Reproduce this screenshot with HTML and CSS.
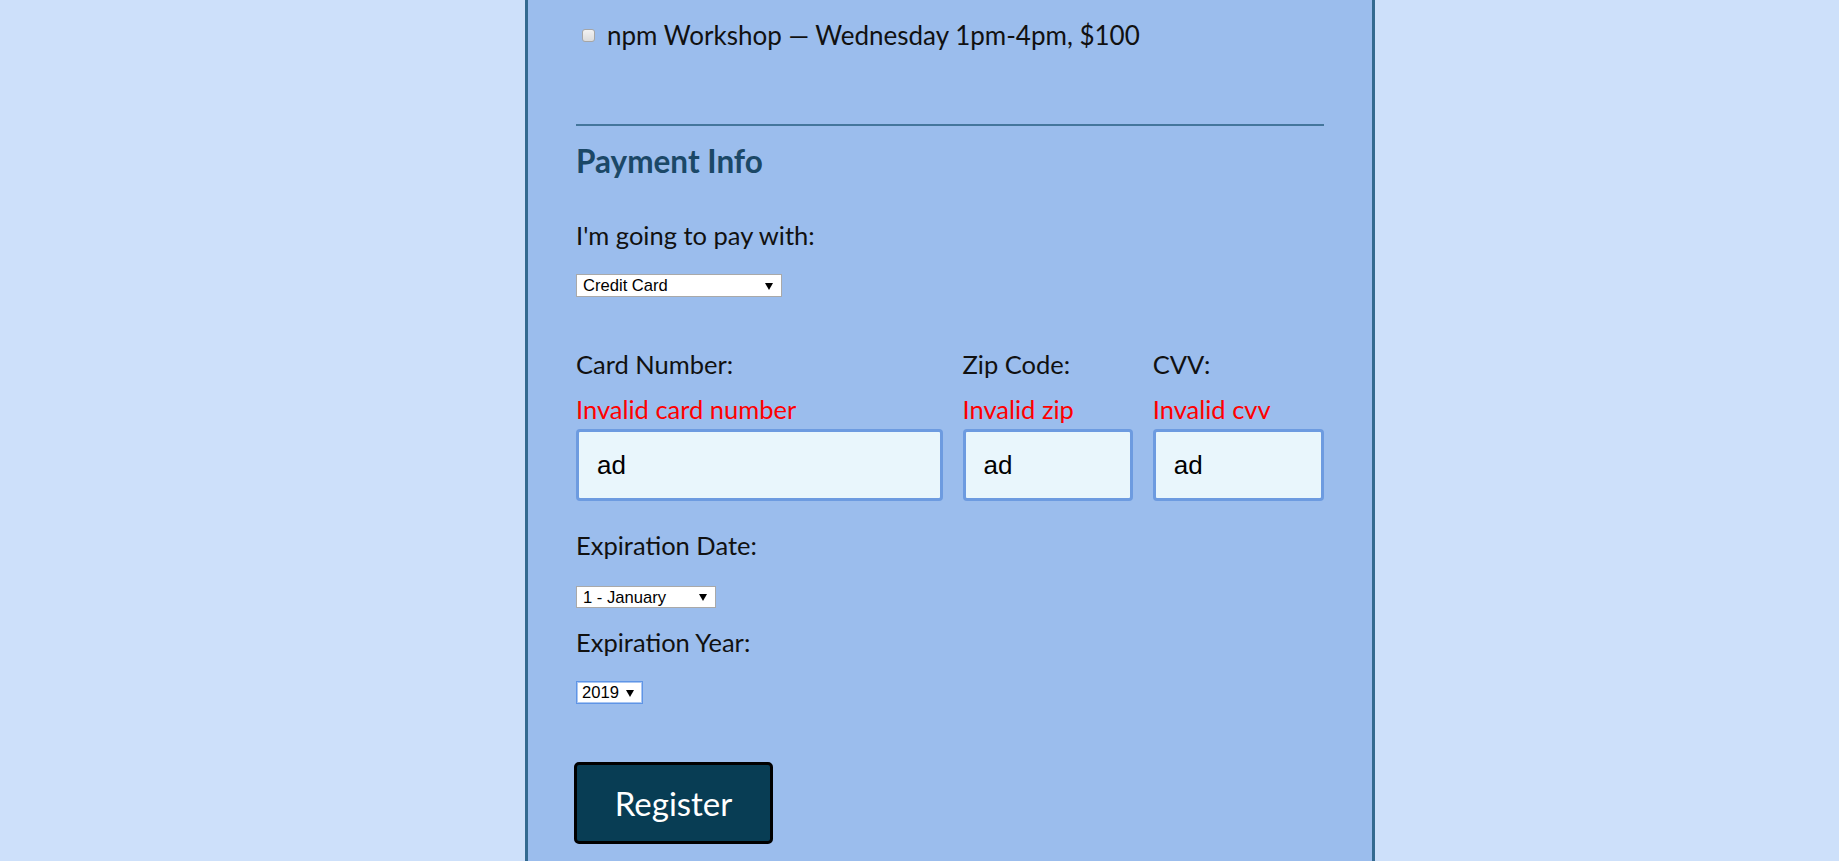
FILE: index.html
```html
<!DOCTYPE html>
<html lang="en">
<head>
<meta charset="utf-8">
<title>Registration</title>
<link rel="stylesheet" href="styles.css">
</head>
<body>
<div class="page">
  <form class="form">
    <label class="activity">
      <input type="checkbox" class="check" name="npm">
      <span>npm Workshop — Wednesday 1pm-4pm, $100</span>
    </label>

    <hr class="rule">

    <h2 class="heading">Payment Info</h2>

    <p class="label label-pay">I'm going to pay with:</p>
    <span class="select-wrap select-pay">
      <select class="select">
        <option>Credit Card</option>
        <option>PayPal</option>
        <option>Bitcoin</option>
      </select>
    </span>

    <div class="card-grid">
      <div class="field">
        <p class="label">Card Number:</p>
        <p class="error">Invalid card number</p>
        <input class="input" type="text" value="ad">
      </div>
      <div class="field">
        <p class="label">Zip Code:</p>
        <p class="error">Invalid zip</p>
        <input class="input" type="text" value="ad">
      </div>
      <div class="field">
        <p class="label">CVV:</p>
        <p class="error">Invalid cvv</p>
        <input class="input" type="text" value="ad">
      </div>
    </div>

    <p class="label label-date">Expiration Date:</p>
    <span class="select-wrap select-month">
      <select class="select">
        <option>1 - January</option>
      </select>
    </span>

    <p class="label label-year">Expiration Year:</p>
    <span class="select-wrap select-year">
      <select class="select select-focus">
        <option>2019</option>
      </select>
    </span>

    <div class="actions">
      <button type="button" class="button">Register</button>
    </div>
  </form>
</div>
</body>
</html>
```
FILE: styles.css
```css
html, body {
  margin: 0;
  padding: 0;
  height: 100%;
  overflow: hidden;
}

body {
  background: #cde0fa;
  font-family: Lato, "Noto Sans", sans-serif;
  color: #111;
}

.page {
  display: flex;
  justify-content: center;
  padding-left: 61px;
  min-height: 100%;
  box-sizing: border-box;
}

.form {
  width: 850px;
  box-sizing: border-box;
  background: #9bbded;
  border-left: 3px solid #336a90;
  border-right: 3px solid #336a90;
  padding: 20px 48px 40px 48px;
  display: flex;
  flex-direction: column;
  align-items: flex-start;
}

.activity {
  display: flex;
  align-items: center;
  gap: 12px;
  font-size: 26px;
  line-height: 30px;
  margin-left: 6px;
}

.check {
  appearance: none;
  -webkit-appearance: none;
  width: 13px;
  height: 13px;
  margin: 0;
  border: 1px solid #a6a6a6;
  border-radius: 3px;
  background: linear-gradient(#f2f2f2, #dcdcdc);
  box-sizing: border-box;
  flex: none;
}

.rule {
  align-self: stretch;
  border: 0;
  border-top: 2px solid #44769c;
  margin: 74px 0 0 0;
  height: 0;
}

.heading {
  margin: 16px 0 0 0;
  font-size: 31.5px;
  line-height: 38px;
  font-weight: 700;
  color: #1b4867;
}

.label {
  margin: 0;
  font-size: 25.5px;
  line-height: 30px;
}

.label-pay { margin-top: 40px; }
.label-date { margin-top: 29px; }
.label-year { margin-top: 19px; }

.select-wrap {
  position: relative;
  display: inline-block;
}

.select-wrap::after {
  content: "";
  position: absolute;
  right: 9px;
  top: 50%;
  margin-top: -3px;
  border-left: 4px solid transparent;
  border-right: 4px solid transparent;
  border-top: 7px solid #000;
  pointer-events: none;
}

.select {
  appearance: none;
  -webkit-appearance: none;
  display: block;
  margin: 0;
  border: 1px solid #a9a9a9;
  border-radius: 0;
  background: #fff;
  color: #000;
  font-family: "Liberation Sans", Arial, sans-serif;
  font-size: 16.6px;
  padding: 0 0 0 6px;
  box-sizing: border-box;
}

.select-pay { margin-top: 24px; }
.select-pay .select { width: 206px; height: 23px; }

.select-month { margin-top: 26px; }
.select-month .select { width: 140px; height: 22px; }

.select-year { margin-top: 24px; }
.select-year .select { width: 67px; height: 23px; padding-left: 5px; }

.select-focus {
  border-color: #5f95e6;
  box-shadow: inset 0 0 0 1px #a9c6f2;
}

.card-grid {
  align-self: stretch;
  display: grid;
  grid-template-columns: 366fr 170fr 171fr;
  column-gap: 20px;
  margin-top: 52px;
}

.field {
  display: flex;
  flex-direction: column;
  min-width: 0;
}

.error {
  margin: 15px 0 0 0;
  font-size: 25.5px;
  line-height: 30px;
  color: #ff0000;
}

.input {
  margin-top: 5px;
  height: 72px;
  width: 100%;
  box-sizing: border-box;
  border: 3px solid #6d9be0;
  border-radius: 4px;
  background: #e9f6fc;
  padding: 0 0 0 18px;
  font-family: "Liberation Sans", Arial, sans-serif;
  font-size: 26px;
  color: #000;
  outline: none;
}

.actions {
  margin-top: 58px;
  margin-left: -2px;
}

.button {
  width: 199px;
  height: 82px;
  box-sizing: border-box;
  background: #083d54;
  border: 3px solid #000;
  border-radius: 5px;
  color: #fff;
  font-family: Lato, "Noto Sans", sans-serif;
  font-size: 33px;
  padding: 0;
  display: flex;
  align-items: center;
  justify-content: center;
}
```
